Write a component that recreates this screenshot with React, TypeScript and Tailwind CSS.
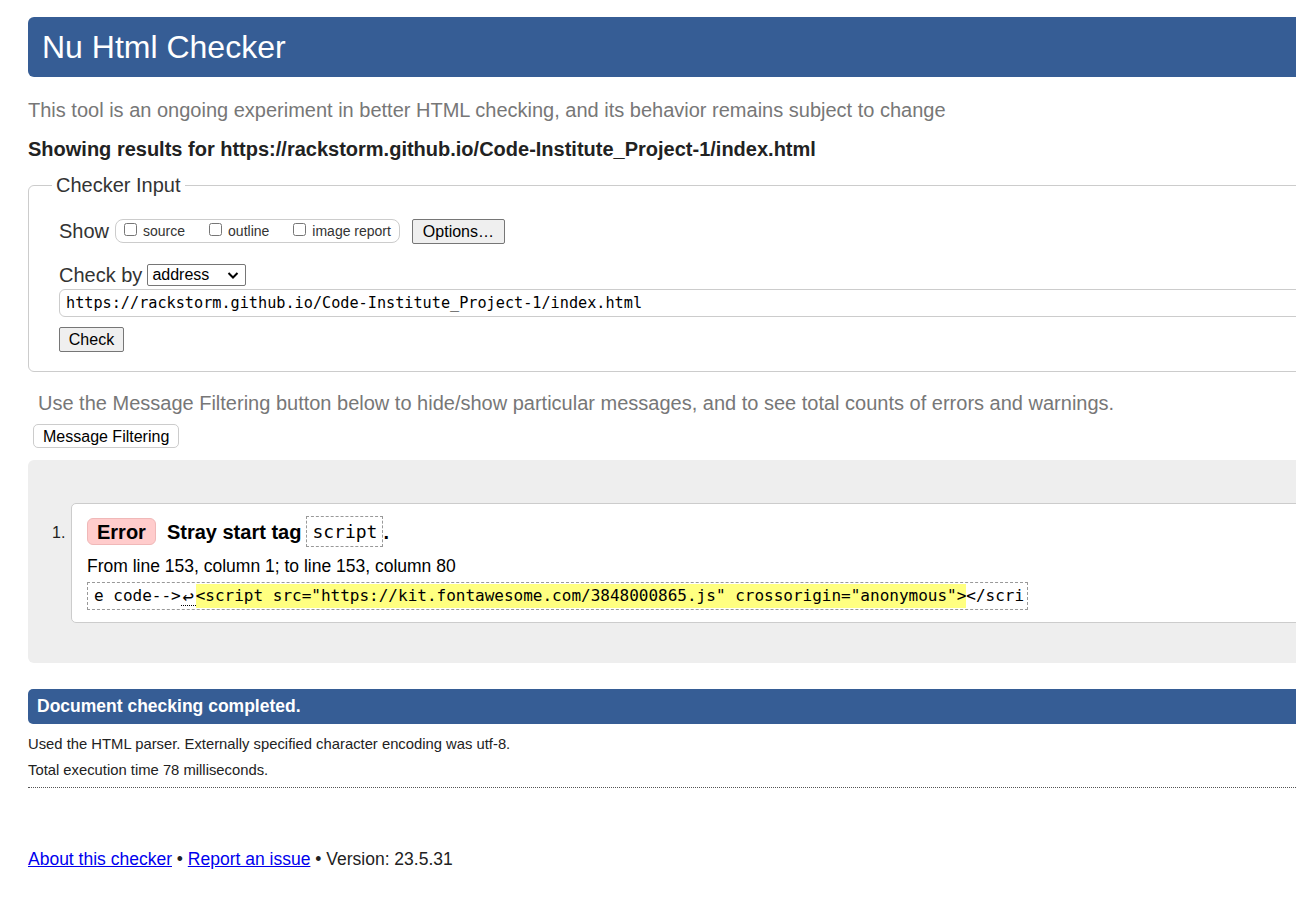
import React from "react";

const sans = { fontFamily: '"Liberation Sans", Arial, sans-serif' };
const mono = { fontFamily: '"DejaVu Sans Mono", Consolas, monospace' };

export default function App() {
  return (
    <div className="w-[1296px] h-[922px] overflow-hidden bg-white text-[#222]" style={sans}>
      <div className="w-[1420px] pl-[28px]">
        {/* header */}
        <div className="mt-[17px] h-[60px] rounded-[6px] bg-[#365d95] flex items-center pl-[14px]">
          <h1 className="text-[32px] leading-none text-white font-normal">Nu Html Checker</h1>
        </div>

        <p className="mt-[21px] text-[20px] leading-[24px] text-[#777]">
          This tool is an ongoing experiment in better HTML checking, and its behavior remains subject to change
        </p>
        <p className="mt-[15px] text-[20px] leading-[24px] font-bold text-[#222]">
          Showing results for https://rackstorm.github.io/Code-Institute_Project-1/index.html
        </p>

        {/* fieldset */}
        <fieldset className="mt-[12px] border border-[#ccc] rounded-[6px] p-0 pb-[19px]">
          <legend className="ml-[23px] px-[4px] text-[20px] leading-[24px] text-[#333]">Checker Input</legend>
          <div className="pl-[30px]">
            <div className="mt-[21px] flex items-center h-[26px]">
              <span className="text-[20px] text-[#333] mr-[6px]">Show</span>
              <div className="flex items-center h-[24px] border border-[#ccc] rounded-[8px] pl-[8px] pr-[8px] text-[14px] text-[#333]">
                <label className="flex items-center mr-[24px]">
                  <input type="checkbox" className="w-[13px] h-[13px] mr-[6px] -mt-[4px]" />
                  source
                </label>
                <label className="flex items-center mr-[24px]">
                  <input type="checkbox" className="w-[13px] h-[13px] mr-[6px] -mt-[4px]" />
                  outline
                </label>
                <label className="flex items-center">
                  <input type="checkbox" className="w-[13px] h-[13px] mr-[6px] -mt-[4px]" />
                  image report
                </label>
              </div>
              <button className="ml-[12px] h-[25px] w-[93px] border border-[#767676] rounded-[2px] bg-[#efefef] text-[16px] text-black">
                Options…
              </button>
            </div>
            <div className="mt-[19px] flex items-center h-[24px]">
              <span className="text-[20px] text-[#333] mr-[5px]">Check by</span>
              <div className="relative h-[22px] w-[99px] border border-[#767676] rounded-[2px] bg-white flex items-center pl-[4px] text-[16px] text-black">
                address
                <svg className="absolute right-[6px] top-[6px]" width="12" height="9" viewBox="0 0 12 9">
                  <path d="M1.5 2 L6 6.5 L10.5 2" fill="none" stroke="#000" strokeWidth="2" />
                </svg>
              </div>
            </div>
            <div
              className="mt-[2px] h-[28px] border border-[#ccc] rounded-[6px] flex items-center pl-[6px] text-[15.2px] text-black"
              style={mono}
            >
              https://rackstorm.github.io/Code-Institute_Project-1/index.html
            </div>
            <button className="mt-[10px] h-[25px] w-[65px] border border-[#767676] rounded-[2px] bg-[#efefef] text-[16px] text-black block">
              Check
            </button>
          </div>
        </fieldset>

        <p className="mt-[19px] ml-[10px] text-[20px] leading-[24px] text-[#777]">
          Use the Message Filtering button below to hide/show particular messages, and to see total counts of errors and warnings.
        </p>
        <button className="mt-[9px] ml-[5px] h-[24px] px-[9px] border border-[#ccc] rounded-[5px] bg-white text-[16px] text-black block">
          Message Filtering
        </button>

        {/* results */}
        <div className="mt-[12px] h-[203px] bg-[#eeeeee] rounded-[6px] pt-[43px] pl-[24px] flex">
          <span className="w-[19px] mt-[18px] text-[16px] text-[#222]">1.</span>
          <div className="h-[120px] flex-1 bg-white border border-[#ccc] rounded-[5px] pt-[12px] pl-[15px]">
            <div className="flex items-center h-[31px]">
              <span className="h-[27px] px-[9px] flex items-center rounded-[6px] bg-[#ffcccc] border border-[#f0b8b8] text-[20px] font-bold text-black">
                Error
              </span>
              <span className="ml-[11px] text-[20px] font-bold text-black">Stray start tag</span>
              <code
                className="ml-[5px] h-[31px] px-[5px] flex items-center border border-dashed border-[#999] text-[18px] text-black"
                style={mono}
              >
                script
              </code>
              <span className="text-[20px] font-bold text-black">.</span>
            </div>
            <p className="mt-[7px] text-[17.5px] leading-[24px] text-black">From line 153, column 1; to line 153, column 80</p>
            <div
              className="mt-[4px] w-[941px] h-[28px] overflow-hidden border border-dashed border-[#999] flex items-center pl-[6px] text-[16px] text-black whitespace-pre"
              style={mono}
            >
              <span>e code--&gt;</span>
              <span className="inline-block w-[15px] text-center border-b border-dotted border-black leading-[18px] text-[19px]">↩</span>
              <span className="bg-[#ffff80]">&lt;script src="https://kit.fontawesome.com/3848000865.js" crossorigin="anonymous"&gt;</span>
              <span>&lt;/scri</span>
            </div>
          </div>
        </div>

        {/* completed */}
        <div className="mt-[26px] h-[35px] rounded-[5px] bg-[#365d95] flex items-center pl-[9px] text-[17.5px] font-bold text-white">
          Document checking completed.
        </div>
        <p className="mt-[10px] text-[14.8px] leading-[20px] text-[#222]">
          Used the HTML parser. Externally specified character encoding was utf-8.
        </p>
        <p className="mt-[6px] text-[14.8px] leading-[20px] text-[#222]">Total execution time 78 milliseconds.</p>
        <div className="mt-[7px] border-t border-dotted border-[#555]" />

        <p className="mt-[59px] text-[17.5px] leading-[24px] text-[#222]">
          <a href="#" className="text-[#0000ee] underline">About this checker</a>
          {" • "}
          <a href="#" className="text-[#0000ee] underline">Report an issue</a>
          {" • Version: 23.5.31"}
        </p>
      </div>
    </div>
  );
}
